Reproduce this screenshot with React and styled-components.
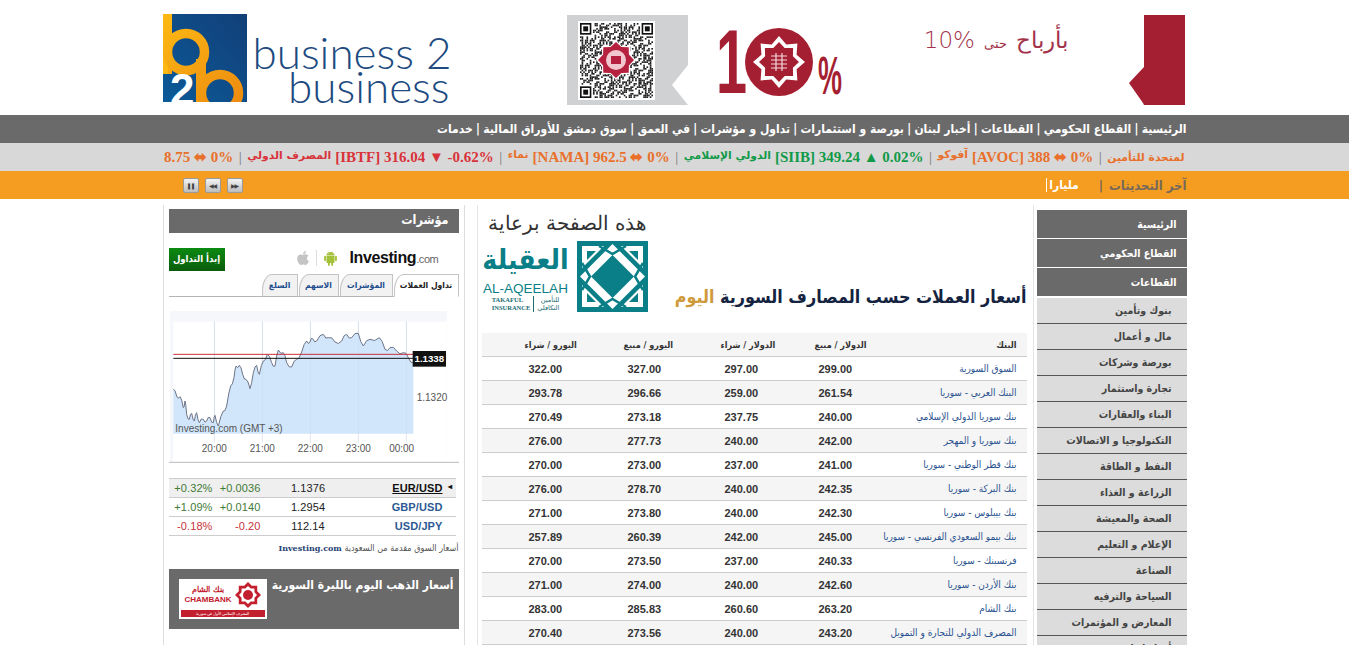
import React from "react";
import styled, { createGlobalStyle } from "styled-components";
import { FaApple } from "react-icons/fa";
import { AiFillAndroid } from "react-icons/ai";

const GlobalStyle = createGlobalStyle`
  html, body {
    margin: 0;
    padding: 0;
    overflow: hidden;
    background: #fff;
    font-family: "DejaVu Sans Condensed", "DejaVu Sans", "Liberation Sans", sans-serif;
  }
`;

const Inner = styled.div`
  width: 1024px;
  margin: 0 auto;
`;

const Header = styled(Inner)`
  height: 101px;
  padding-top: 14px;
  display: flex;
`;

const Logo = styled.div`
  width: 287px;
  height: 91px;
  display: flex;
`;

const LogoWords = styled.div`
  margin-left: 6px;
  width: 197px;
  padding-top: 21px;
  font-family: "Lato", sans-serif;
  font-weight: 300;
  font-size: 44px;
  line-height: 34px;
  color: #1d4a80;
  text-align: right;
  white-space: nowrap;
`;

const Banner = styled.div`
  margin: 1px 0 0 117px;
  width: 618px;
  height: 90px;
  display: flex;
  align-items: flex-start;
`;

const TenGroup = styled.div`
  margin: 12px 0 0 31px;
  width: 124px;
  height: 69px;
  display: flex;
  align-items: center;
  color: #a51f32;
  font-family: "Liberation Sans", sans-serif;
  font-weight: 700;
`;

const TenOne = styled.span`
  flex-shrink: 0;
  width: 29px;
  margin-left: -3px;
  font-size: 90px;
  line-height: 66px;
  transform: scaleX(0.62);
  transform-origin: left center;
`;

const TenBadge = styled.svg`
  flex-shrink: 0;
`;

const TenPercent = styled.span`
  flex-shrink: 0;
  font-size: 54px;
  line-height: 44px;
  margin-left: 5px;
  margin-top: 27px;
  transform: scaleX(0.5);
  transform-origin: left center;
`;

const BannerText = styled.div`
  margin: 9px 0 0 82px;
  width: 144px;
  direction: rtl;
  white-space: nowrap;
  word-spacing: 2px;
  font-family: "DejaVu Sans", sans-serif;
  font-weight: 300;
  font-size: 23px;
  line-height: 32px;
  color: #a3334a;
`;

const BannerSmall = styled.span`
  font-size: 13px;
`;

const RedTab = styled.svg`
  margin-left: 60px;
`;

const Band = styled.div`
  background: ${(p) => p.$bg};
  height: 28px;
`;

const NavRow = styled(Inner)`
  height: 27px;
  padding-bottom: 1px;
  direction: rtl;
  display: flex;
  align-items: center;
  gap: 3.25px;
  white-space: nowrap;
  color: #fff;
  font-weight: 700;
  font-size: 12px;
`;

const TickerRow = styled(Inner)`
  height: 28px;
  width: 1022px;
  padding-right: 2px;
  display: flex;
  justify-content: flex-end;
  align-items: center;
  gap: 5.5px;
  overflow: hidden;
  white-space: nowrap;
  font-family: "Liberation Serif", serif;
  font-weight: 700;
  font-size: 15px;
`;

const TickerItem = styled.span`
  display: inline-flex;
  flex-shrink: 0;
  gap: 4px;
  color: ${(p) => p.$color};
`;

const TickerName = styled.span`
  font-family: "DejaVu Sans", sans-serif;
  font-size: 10.75px;
`;

const TickerSep = styled.span`
  flex-shrink: 0;
  color: #777;
  font-weight: 400;
`;

const UpdatesRow = styled(Inner)`
  height: 28px;
  display: flex;
  align-items: center;
  justify-content: space-between;
`;

const Controls = styled.div`
  display: flex;
  gap: 6px;
  margin-left: 20px;
`;

const ControlButton = styled.span`
  width: 14px;
  height: 13px;
  display: flex;
  align-items: center;
  justify-content: center;
  border: 1px solid #9a9a9a;
  border-radius: 2px;
  background: linear-gradient(#f4f4f4, #bdbdbd);
  color: #444;
  font-family: "DejaVu Sans", sans-serif;
  font-size: 6px;
  letter-spacing: -1px;
`;

const Updates = styled.div`
  direction: rtl;
  display: flex;
  align-items: center;
  white-space: nowrap;
  font-size: 13px;
  font-weight: 700;
  color: #77695a;
`;

const UpdatesSep = styled.span`
  margin: 0 6px;
`;

const UpdatesNews = styled.span`
  margin-right: 14px;
  padding-left: 2px;
  color: #fff;
  font-size: 12px;
  border-left: 1px solid #fff;
`;

const Columns = styled(Inner)`
  margin-top: 6px;
  display: flex;
  align-items: flex-start;
`;

const LeftColumn = styled.aside`
  box-sizing: border-box;
  width: 302px;
  height: 445px;
  padding: 4px 5px 0;
  border: solid #ddd;
  border-width: 0 1px;
`;

const PanelTitle = styled.div`
  height: 24px;
  padding-right: 10px;
  background: #6b6a6a;
  color: #fff;
  direction: rtl;
  font-weight: 700;
  font-size: 12.5px;
  line-height: 22px;
`;

const WidgetTop = styled.div`
  margin-top: 15px;
  height: 24px;
  display: flex;
  align-items: flex-start;
`;

const TradeButton = styled.div`
  width: 56px;
  height: 23px;
  background: linear-gradient(#0c8a12, #0a5c0c);
  color: #fff;
  text-align: center;
  font-size: 9.5px;
  font-weight: 700;
  line-height: 21px;
  direction: rtl;
`;

const PlatformIcons = styled.div`
  margin: 1px 0 0 70px;
  height: 18px;
  display: flex;
  align-items: center;
  gap: 5px;
`;

const PlatformDivider = styled.span`
  width: 1px;
  height: 16px;
  background: #ddd;
`;

const InvestingMark = styled.div`
  margin-left: 11px;
  font-family: "Liberation Sans", sans-serif;
  font-weight: 700;
  font-size: 16px;
  letter-spacing: -0.4px;
  line-height: 20px;
  color: #111;
`;

const InvestingCom = styled.span`
  font-weight: 400;
  font-size: 11px;
  color: #666;
`;

const Tabs = styled.div`
  height: 24px;
  display: flex;
  direction: rtl;
  align-items: flex-end;
  gap: 1px;
  border-bottom: 1px solid #b5b5b5;
`;

const Tab = styled.div`
  box-sizing: border-box;
  width: ${(p) => p.$width}px;
  height: 23px;
  margin-bottom: -1px;
  border: 1px solid #c4c4c4;
  border-bottom: ${(p) => (p.$active ? "1px solid #fff" : "1px solid #b5b5b5")};
  border-top-left-radius: 10px 16px;
  background: ${(p) => (p.$active ? "#fff" : "#f2f2f2")};
  color: ${(p) => (p.$active ? "#222" : "#1f4f8f")};
  text-align: center;
  font-size: 8.5px;
  font-weight: 700;
  line-height: 21px;
`;

const ChartSvg = styled.svg`
  display: block;
  margin-top: 4px;
`;

const QuoteTable = styled.div`
  margin-top: 15px;
  border-top: 1px solid #ccc;
  width: 287px;
`;

const QuoteRow = styled.div`
  height: 18px;
  display: grid;
  grid-template-columns: 44px 48px 71px 1fr;
  align-items: center;
  border-bottom: 1px solid #ccc;
  background: ${(p) => (p.$active ? "#efefef" : "#fff")};
  font-family: "Liberation Sans", sans-serif;
  font-size: 11px;
  letter-spacing: 0.1px;
`;

const QuoteChange = styled.span`
  text-align: right;
  color: ${(p) => (p.$up ? "#3f7a35" : "#c8323a")};
`;

const QuoteValue = styled.span`
  text-align: center;
  padding-left: 24px;
  color: #222;
`;

const QuoteName = styled.span`
  text-align: right;
  padding-right: 13px;
  font-weight: 700;
  color: ${(p) => (p.$active ? "#111" : "#2c5a94")};
  text-decoration: ${(p) => (p.$active ? "underline" : "none")};
  position: relative;
`;

const QuoteArrow = styled.span`
  position: absolute;
  right: 3px;
  top: 0;
  font-size: 8px;
  color: #111;
`;

const QuoteNote = styled.div`
  margin-top: 4px;
  height: 24px;
  direction: rtl;
  white-space: nowrap;
  font-size: 9px;
  line-height: 16px;
  color: #555;
`;

const NoteLink = styled.span`
  font-family: "DejaVu Serif", serif;
  font-size: 8px;
  font-weight: 700;
  color: #1f4272;
`;

const GoldBox = styled.div`
  margin-top: 5px;
  height: 60px;
  box-sizing: border-box;
  padding: 10px 5px 0 10px;
  background: #6b6a6a;
  display: flex;
  justify-content: space-between;
`;

const GoldTitle = styled.div`
  direction: rtl;
  white-space: nowrap;
  color: #fff;
  font-weight: 700;
  font-size: 12px;
  line-height: 12px;
`;

const BankCard = styled.div`
  flex-shrink: 0;
  width: 88px;
  height: 40px;
  background: #fff;
  display: flex;
  flex-direction: column;
  align-items: center;
  color: #c2202e;
  font-family: "Liberation Sans", sans-serif;
`;

const BankCardTop = styled.div`
  height: 31px;
  display: flex;
  align-items: center;
  gap: 3px;
`;

const BankCardNames = styled.div`
  display: flex;
  flex-direction: column;
  align-items: center;
  font-size: 8px;
  font-weight: 700;
  line-height: 10px;
`;

const BankCardBar = styled.div`
  width: 84px;
  height: 7px;
  background: #c2202e;
  color: #fff;
  font-size: 4px;
  line-height: 7px;
  text-align: center;
  direction: rtl;
  overflow: hidden;
  white-space: nowrap;
`;

const CenterColumn = styled.main`
  box-sizing: border-box;
  width: 557px;
  height: 445px;
  margin-left: 12px;
  padding: 0 6px 0 4px;
  border: solid #e4e4e4;
  border-width: 0 1px;
`;

const SponsorRow = styled.div`
  height: 128px;
  display: flex;
  justify-content: space-between;
  align-items: flex-end;
`;

const Sponsor = styled.div`
  width: 166px;
  margin-bottom: 21px;
`;

const SponsorTitle = styled.div`
  direction: rtl;
  white-space: nowrap;
  color: #333;
  font-size: 20px;
  line-height: 36px;
  font-family: "DejaVu Sans", sans-serif;
  font-weight: 300;
`;

const SponsorBody = styled.div`
  display: flex;
  justify-content: space-between;
  height: 71px;
  color: #0b7f87;
`;

const SponsorWords = styled.div`
  width: 88px;
  display: flex;
  flex-direction: column;
  align-items: center;
`;

const SponsorArabic = styled.div`
  height: 41px;
  font-size: 28px;
  font-weight: 700;
  line-height: 38px;
`;

const SponsorLatin = styled.div`
  font-family: "Liberation Sans", sans-serif;
  font-size: 13.5px;
  line-height: 14px;
  white-space: nowrap;
`;

const SponsorSmall = styled.div`
  display: flex;
  gap: 3px;
  align-items: center;
  font-family: "Liberation Serif", serif;
  font-size: 6.5px;
  font-weight: 700;
  line-height: 8px;
  color: #1a6d74;
`;

const SponsorSmallArabic = styled.div`
  border-left: 1px solid #1a6d74;
  padding-left: 3px;
  text-align: right;
  font-family: "DejaVu Sans", sans-serif;
  font-weight: 400;
`;

const PageTitle = styled.h1`
  margin: 0 0 24px;
  direction: rtl;
  white-space: nowrap;
  color: #14233f;
  font-size: 17.8px;
  font-weight: 700;
  line-height: 24px;
`;

const TitleAccent = styled.span`
  color: #cf9a3c;
`;

const RateRow = styled.div`
  box-sizing: border-box;
  height: 24px;
  padding-left: 47px;
  display: grid;
  grid-template-columns: 99px 97px 94px 60px 1fr;
  align-items: center;
  border-bottom: 1px solid #ccc;
  background: ${(p) => (p.$shade ? "#f5f5f5" : "#fff")};
`;

const HeadCell = styled.span`
  direction: rtl;
  text-align: left;
  margin-left: -4px;
  white-space: nowrap;
  color: #333;
  font-size: 9px;
  font-weight: 700;
`;

const BankHead = styled(HeadCell)`
  text-align: right;
  padding-right: 10px;
`;

const RateCell = styled.span`
  font-family: "Liberation Sans", sans-serif;
  font-size: 11px;
  font-weight: 700;
  color: #333;
`;

const BankCell = styled.span`
  direction: rtl;
  padding-right: 10px;
  white-space: nowrap;
  color: #2a528f;
  font-size: 10px;
`;

const RightColumn = styled.nav`
  width: 150px;
  margin-left: 3px;
  padding-top: 5px;
`;

const SideLink = styled.div`
  box-sizing: border-box;
  height: ${(p) => (p.$main ? 28 : 26)}px;
  margin-bottom: ${(p) => (p.$main ? 1 : 0)}px;
  padding-right: ${(p) => (p.$main ? 10 : 15)}px;
  direction: rtl;
  white-space: nowrap;
  background: ${(p) => (p.$main ? "#6b6a6a" : "#dcdcdc")};
  border-bottom: ${(p) => (p.$main ? "none" : "1px solid #555")};
  color: ${(p) => (p.$main ? "#fff" : "#444")};
  font-size: 10.5px;
  font-weight: 700;
  line-height: ${(p) => (p.$main ? 28 : 24)}px;
`;

const SideGap = styled.div`
  height: 1px;
`;

const navItems = [
  "الرئيسية",
  "القطاع الحكومي",
  "القطاعات",
  "أخبار لبنان",
  "بورصة و استثمارات",
  "تداول و مؤشرات",
  "في العمق",
  "سوق دمشق للأوراق المالية",
  "خدمات",
];

const tickerItems = [
  { color: "#e8702a", name: "", text: "8.75 ⬌ 0%" },
  { color: "#d8323a", name: "المصرف الدولي", text: "[IBTF] 316.04 ▼ -0.62%" },
  { color: "#e8702a", name: "نماء", text: "[NAMA] 962.5 ⬌ 0%" },
  { color: "#119a48", name: "الدولي الإسلامي", text: "[SIIB] 349.24 ▲ 0.02%" },
  { color: "#e8702a", name: "آفوكو", text: "[AVOC] 388 ⬌ 0%" },
  { color: "#e8702a", name: "لمتحدة للتأمين", text: "" },
];

const quotes = [
  { name: "EUR/USD", value: "1.1376", change: "+0.0036", pct: "+0.32%", up: true, active: true },
  { name: "GBP/USD", value: "1.2954", change: "+0.0140", pct: "+1.09%", up: true },
  { name: "USD/JPY", value: "112.14", change: "-0.20", pct: "-0.18%" },
];

const rates = [
  ["السوق السورية", "299.00", "297.00", "327.00", "322.00"],
  ["البنك العربي - سوريا", "261.54", "259.00", "296.66", "293.78"],
  ["بنك سوريا الدولي الإسلامي", "240.00", "237.75", "273.18", "270.49"],
  ["بنك سوريا و المهجر", "242.00", "240.00", "277.73", "276.00"],
  ["بنك قطر الوطني - سوريا", "241.00", "237.00", "273.00", "270.00"],
  ["بنك البركة - سوريا", "242.35", "240.00", "278.70", "276.00"],
  ["بنك بيبلوس - سوريا", "242.30", "240.00", "273.80", "271.00"],
  ["بنك بيمو السعودي الفرنسي - سوريا", "245.00", "242.00", "260.39", "257.89"],
  ["فرنسبنك - سوريا", "240.33", "237.00", "273.50", "270.00"],
  ["بنك الأردن - سوريا", "242.60", "240.00", "274.00", "271.00"],
  ["بنك الشام", "263.20", "260.60", "285.83", "283.00"],
  ["المصرف الدولي للتجارة و التمويل", "243.20", "240.00", "273.56", "270.40"],
];

const sectors = [
  "بنوك وتأمين",
  "مال و أعمال",
  "بورصة وشركات",
  "تجارة واستثمار",
  "البناء والعقارات",
  "التكنولوجيا و الاتصالات",
  "النفط و الطاقة",
  "الزراعة و الغذاء",
  "الصحة والمعيشة",
  "الإعلام و التعليم",
  "الصناعة",
  "السياحة والترفيه",
  "المعارض و المؤتمرات",
  "أخبار لبنان",
];

const starPoints = (cx, cy, outer, inner, count) => {
  const points = [];
  for (let i = 0; i < count * 2; i++) {
    const r = i % 2 ? inner : outer;
    const a = (Math.PI * i) / count - Math.PI / 2;
    points.push(`${(cx + r * Math.cos(a)).toFixed(1)},${(cy + r * Math.sin(a)).toFixed(1)}`);
  }
  return points.join(" ");
};

const B2bMark = () => (
  <svg width="84" height="91" viewBox="0 0 84 91">
    <defs>
      <linearGradient id="b2bBlue" x1="0" y1="1" x2="1" y2="0">
        <stop offset="0" stopColor="#0b5a98" />
        <stop offset="1" stopColor="#123f78" />
      </linearGradient>
      <linearGradient id="b2bGold" gradientUnits="userSpaceOnUse" x1="0" y1="0" x2="84" y2="88">
        <stop offset="0" stopColor="#fdb913" />
        <stop offset="1" stopColor="#ec8a10" />
      </linearGradient>
      <clipPath id="b2bClip">
        <rect width="84" height="88" />
      </clipPath>
    </defs>
    <g clipPath="url(#b2bClip)">
      <rect width="84" height="88" fill="url(#b2bBlue)" />
      <rect width="9" height="60" fill="url(#b2bGold)" />
      <path d="M0 38H5V60H0Z" fill="#fdb913" />
      <rect x="33" y="45" width="10" height="43" fill="url(#b2bGold)" />
      <g fill="none" stroke="url(#b2bGold)" strokeWidth="9.5">
        <circle cx="23" cy="38" r="18.5" />
        <circle cx="57" cy="79" r="18.5" />
      </g>
      <text x="7" y="91" fill="#fff" fontFamily="Liberation Sans" fontWeight="700" fontSize="44">2</text>
    </g>
  </svg>
);

const qrCells = () => {
  const cells = [];
  let seed = 137;
  for (let y = 0; y < 45; y++) {
    for (let x = 0; x < 45; x++) {
      seed = (seed * 73 + 41) % 1009;
      const isFinder = (x < 8 && y < 8) || (x > 36 && y < 8) || (x < 8 && y > 36);
      if (!isFinder && seed % 2 === 0) {
        cells.push(<rect key={`${x}-${y}`} x={x} y={y} width="1" height="1" />);
      }
    }
  }
  return cells;
};

const qrFinder = (x, y) => (
  <g key={`${x}-${y}`}>
    <rect x={x} y={y} width="7" height="7" fill="#111" />
    <rect x={x + 1} y={y + 1} width="5" height="5" fill="#fff" />
    <rect x={x + 2} y={y + 2} width="3" height="3" fill="#111" />
  </g>
);

const QrBlock = () => (
  <svg width="121" height="90" viewBox="0 0 121 90">
    <polygon points="0,0 121,0 121,50 105,70 121,90 0,90" fill="#d0d1d3" />
    <rect x="11" y="6" width="77" height="79" fill="#fff" />
    <svg x="13" y="8" width="73" height="75" viewBox="0 0 45 45" preserveAspectRatio="none">
      <g fill="#222">{qrCells()}</g>
      {qrFinder(0, 0)}
      {qrFinder(38, 0)}
      {qrFinder(0, 38)}
    </svg>
    <polygon points={starPoints(49, 45, 20, 15, 8)} fill="#fff" />
    <polygon points={starPoints(49, 45, 18, 14, 8)} fill="#b5213e" />
    <circle cx="49" cy="45" r="10" fill="#f2c8d0" />
    <rect x="44" y="41" width="10" height="8" fill="#b5213e" />
  </svg>
);

const AqeelahIcon = () => (
  <svg width="71" height="71" viewBox="0 0 71 71">
    <rect width="71" height="71" fill="#0b7f87" />
    <polygon points="35.5,3 68,35.5 35.5,68 3,35.5" fill="#fff" />
    <polygon points="35.5,14 57,35.5 35.5,57 14,35.5" fill="#0b7f87" />
    <path d="M5 5H27L5 27ZM66 5H44L66 27ZM5 66H27L5 44ZM66 66H44L66 44Z" fill="#fff" />
    <path d="M10 10H19L10 19ZM61 10H52L61 19ZM10 61H19L10 52ZM61 61H52L61 52Z" fill="#0b7f87" />
    <path d="M22 5L35.5 13L49 5M22 66L35.5 58L49 66M5 22L13 35.5L5 49M66 22L58 35.5L66 49" fill="none" stroke="#0b7f87" strokeWidth="2.5" />
  </svg>
);

const linePoints = [
  [40, 550], [50, 570], [60, 572], [70, 605], [75, 585], [80, 625], [88, 640], [95, 622],
  [103, 645], [110, 620], [118, 650], [130, 640], [140, 645], [150, 635], [160, 650], [165, 628],
  [175, 660], [190, 615], [200, 600], [212, 540], [222, 515], [228, 480], [238, 478], [248, 505],
  [258, 520], [270, 548], [280, 500], [290, 478], [298, 505], [310, 465], [322, 445], [335, 470],
  [345, 480], [355, 432], [370, 440], [380, 470], [395, 483], [410, 460], [425, 438], [440, 405],
  [450, 408], [458, 398], [470, 405], [490, 385], [505, 395], [525, 408], [545, 405], [560, 385],
  [575, 395], [595, 382], [610, 420], [630, 400], [658, 395], [675, 430], [690, 425], [710, 435],
  [730, 440], [745, 455], [760, 470],
];

// adds a small zigzag between the traced points so the line looks like tick data
const jaggedLine = () =>
  linePoints
    .flatMap((p, i) => {
      const next = linePoints[i + 1];
      if (!next) return [p.join(",")];
      const mid = [(p[0] + next[0]) / 2, (p[1] + next[1]) / 2 + (i % 2 ? 6 : -6)];
      return [p.join(","), mid.join(",")];
    })
    .join(" ");

const PriceChart = () => {
  const line = jaggedLine();
  const label = { fill: "#555", fontFamily: "Liberation Sans", fontSize: 30 };
  return (
    <ChartSvg width="290" height="162" viewBox="27 285 870 486">
      <rect x="30" y="315" width="830" height="452" fill="#f5f7fb" />
      <rect x="40" y="347" width="820" height="420" fill="#fff" />
      {[163, 307, 451, 595, 739].map((x) => (
        <line key={x} x1={x} y1="347" x2={x} y2="710" stroke="#dfe5ee" strokeWidth="3" />
      ))}
      <polygon points={`40,683 ${line} 760,683`} fill="#d2e6fb" />
      {[163, 307, 451, 595, 739].map((x) => (
        <line key={x} x1={x} y1="347" x2={x} y2="683" stroke="#c4d6ea" strokeWidth="2" opacity="0.6" />
      ))}
      <polyline points={line} fill="none" stroke="#6d7587" strokeWidth="3" />
      <line x1="40" y1="445" x2="760" y2="445" stroke="#c8303a" strokeWidth="3" />
      <line x1="40" y1="457" x2="760" y2="457" stroke="#111" strokeWidth="3" />
      <rect x="758" y="435" width="100" height="47" fill="#111" />
      <text x="808" y="467" fill="#fff" fontFamily="Liberation Sans" fontSize="29" fontWeight="700" textAnchor="middle">1.1338</text>
      <text x="816" y="585" textAnchor="middle" {...label}>1.1320</text>
      <text x="46" y="678" {...label}>Investing.com (GMT +3)</text>
      {[["20:00", 163], ["21:00", 307], ["22:00", 451], ["23:00", 595], ["00:00", 725]].map(([t, x]) => (
        <text key={t} x={x} y="738" textAnchor="middle" {...label}>{t}</text>
      ))}
      <line x1="27" y1="769" x2="897" y2="769" stroke="#bbb" strokeWidth="3" />
    </ChartSvg>
  );
};

const App = () => {
  return (
    <>
      <GlobalStyle />
      <Header>
        <Logo>
          <B2bMark />
          <LogoWords>
            business 2
            <br />
            business
          </LogoWords>
        </Logo>
        <Banner>
          <QrBlock />
          <TenGroup>
            <TenOne>1</TenOne>
            <TenBadge width="68" height="68" viewBox="0 0 68 68">
              <circle cx="34" cy="34" r="34" fill="#a51f32" />
              <polygon points={starPoints(34, 34, 26, 19, 8)} fill="#fff" />
              <polygon points={starPoints(34, 34, 20, 15, 8)} fill="#a51f32" />
              <path d="M26 28H42M26 32H42M26 36H42M26 40H42M31 25V43M37 25V43" stroke="#f3d8dc" strokeWidth="1.2" />
            </TenBadge>
            <TenPercent>%</TenPercent>
          </TenGroup>
          <BannerText>
            بأرباح <BannerSmall>حتى</BannerSmall> <bdi dir="ltr">10%</bdi>
          </BannerText>
          <RedTab width="56" height="90" viewBox="0 0 56 90">
            <polygon points="15,0 56,0 56,90 15,90 14,88 0,68 15,52" fill="#a51f32" />
          </RedTab>
        </Banner>
      </Header>

      <Band $bg="#6b6a6a">
        <NavRow>
          {navItems.map((item, i) => (
            <React.Fragment key={item}>
              {i > 0 && <span>|</span>}
              <span>{item}</span>
            </React.Fragment>
          ))}
        </NavRow>
      </Band>

      <Band $bg="#d8d8d8">
        <TickerRow>
          {tickerItems.map((item, i) => (
            <React.Fragment key={item.text + item.name}>
              {i > 0 && <TickerSep>|</TickerSep>}
              <TickerItem $color={item.color}>
                {item.name && <TickerName>{item.name}</TickerName>}
                {item.text && <span>{item.text}</span>}
              </TickerItem>
            </React.Fragment>
          ))}
        </TickerRow>
      </Band>

      <Band $bg="#f59d20">
        <UpdatesRow>
          <Controls>
            <ControlButton>❚❚</ControlButton>
            <ControlButton>◀◀</ControlButton>
            <ControlButton>▶▶</ControlButton>
          </Controls>
          <Updates>
            آخر التحديثات
            <UpdatesSep>|</UpdatesSep>
            <UpdatesNews>مليارا</UpdatesNews>
          </Updates>
        </UpdatesRow>
      </Band>

      <Columns>
        <LeftColumn>
          <PanelTitle>مؤشرات</PanelTitle>
          <WidgetTop>
            <TradeButton>إبدأ التداول</TradeButton>
            <PlatformIcons>
              <FaApple size={16} color="#c4c4c4" />
              <PlatformDivider />
              <AiFillAndroid size={17} color="#a4c13a" />
            </PlatformIcons>
            <InvestingMark>
              Investing<InvestingCom>.com</InvestingCom>
            </InvestingMark>
          </WidgetTop>
          <Tabs>
            <Tab $width={65} $active>تداول العملات</Tab>
            <Tab $width={53}>المؤشرات</Tab>
            <Tab $width={40}>الاسهم</Tab>
            <Tab $width={36}>السلع</Tab>
          </Tabs>
          <PriceChart />
          <QuoteTable>
            {quotes.map((q) => (
              <QuoteRow key={q.name} $active={q.active}>
                <QuoteChange $up={q.up}>{q.pct}</QuoteChange>
                <QuoteChange $up={q.up}>{q.change}</QuoteChange>
                <QuoteValue>{q.value}</QuoteValue>
                <QuoteName $active={q.active}>
                  {q.name}
                  {q.active && <QuoteArrow>◂</QuoteArrow>}
                </QuoteName>
              </QuoteRow>
            ))}
          </QuoteTable>
          <QuoteNote>
            أسعار السوق مقدمة من السعودية <NoteLink>Investing.com</NoteLink>
          </QuoteNote>
          <GoldBox>
            <BankCard>
              <BankCardTop>
                <BankCardNames>
                  <span>بنك الشام</span>
                  <span>CHAMBANK</span>
                </BankCardNames>
                <svg width="26" height="26" viewBox="0 0 26 26">
                  <polygon points={starPoints(13, 13, 13, 10, 8)} fill="#c2202e" />
                  <polygon points={starPoints(13, 13, 9, 7, 8)} fill="#fff" />
                  <circle cx="13" cy="13" r="5" fill="#c2202e" />
                </svg>
              </BankCardTop>
              <BankCardBar>المصرف الإسلامي الأول في سورية</BankCardBar>
            </BankCard>
            <GoldTitle>أسعار الذهب اليوم بالليرة السورية</GoldTitle>
          </GoldBox>
        </LeftColumn>

        <CenterColumn>
          <SponsorRow>
            <Sponsor>
              <SponsorTitle>هذه الصفحة برعاية</SponsorTitle>
              <SponsorBody>
                <SponsorWords>
                  <SponsorArabic>العقيلة</SponsorArabic>
                  <SponsorLatin>AL-AQEELAH</SponsorLatin>
                  <SponsorSmall>
                    <div>
                      TAKAFUL
                      <br />
                      INSURANCE
                    </div>
                    <SponsorSmallArabic>
                      للتأمين
                      <br />
                      التكافلي
                    </SponsorSmallArabic>
                  </SponsorSmall>
                </SponsorWords>
                <AqeelahIcon />
              </SponsorBody>
            </Sponsor>
            <PageTitle>
              أسعار العملات حسب المصارف السورية <TitleAccent>اليوم</TitleAccent>
            </PageTitle>
          </SponsorRow>
          <RateRow $shade>
            <HeadCell>اليورو / شراء</HeadCell>
            <HeadCell>اليورو / مبيع</HeadCell>
            <HeadCell>الدولار / شراء</HeadCell>
            <HeadCell>الدولار / مبيع</HeadCell>
            <BankHead>البنك</BankHead>
          </RateRow>
          {rates.map((r, i) => (
            <RateRow key={r[0]} $shade={i % 2 === 1}>
              <RateCell>{r[4]}</RateCell>
              <RateCell>{r[3]}</RateCell>
              <RateCell>{r[2]}</RateCell>
              <RateCell>{r[1]}</RateCell>
              <BankCell>{r[0]}</BankCell>
            </RateRow>
          ))}
        </CenterColumn>

        <RightColumn>
          <SideLink $main>الرئيسية</SideLink>
          <SideLink $main>القطاع الحكومي</SideLink>
          <SideLink $main>القطاعات</SideLink>
          <SideGap />
          {sectors.map((s) => (
            <SideLink key={s}>{s}</SideLink>
          ))}
        </RightColumn>
      </Columns>
    </>
  );
};

export default App;
